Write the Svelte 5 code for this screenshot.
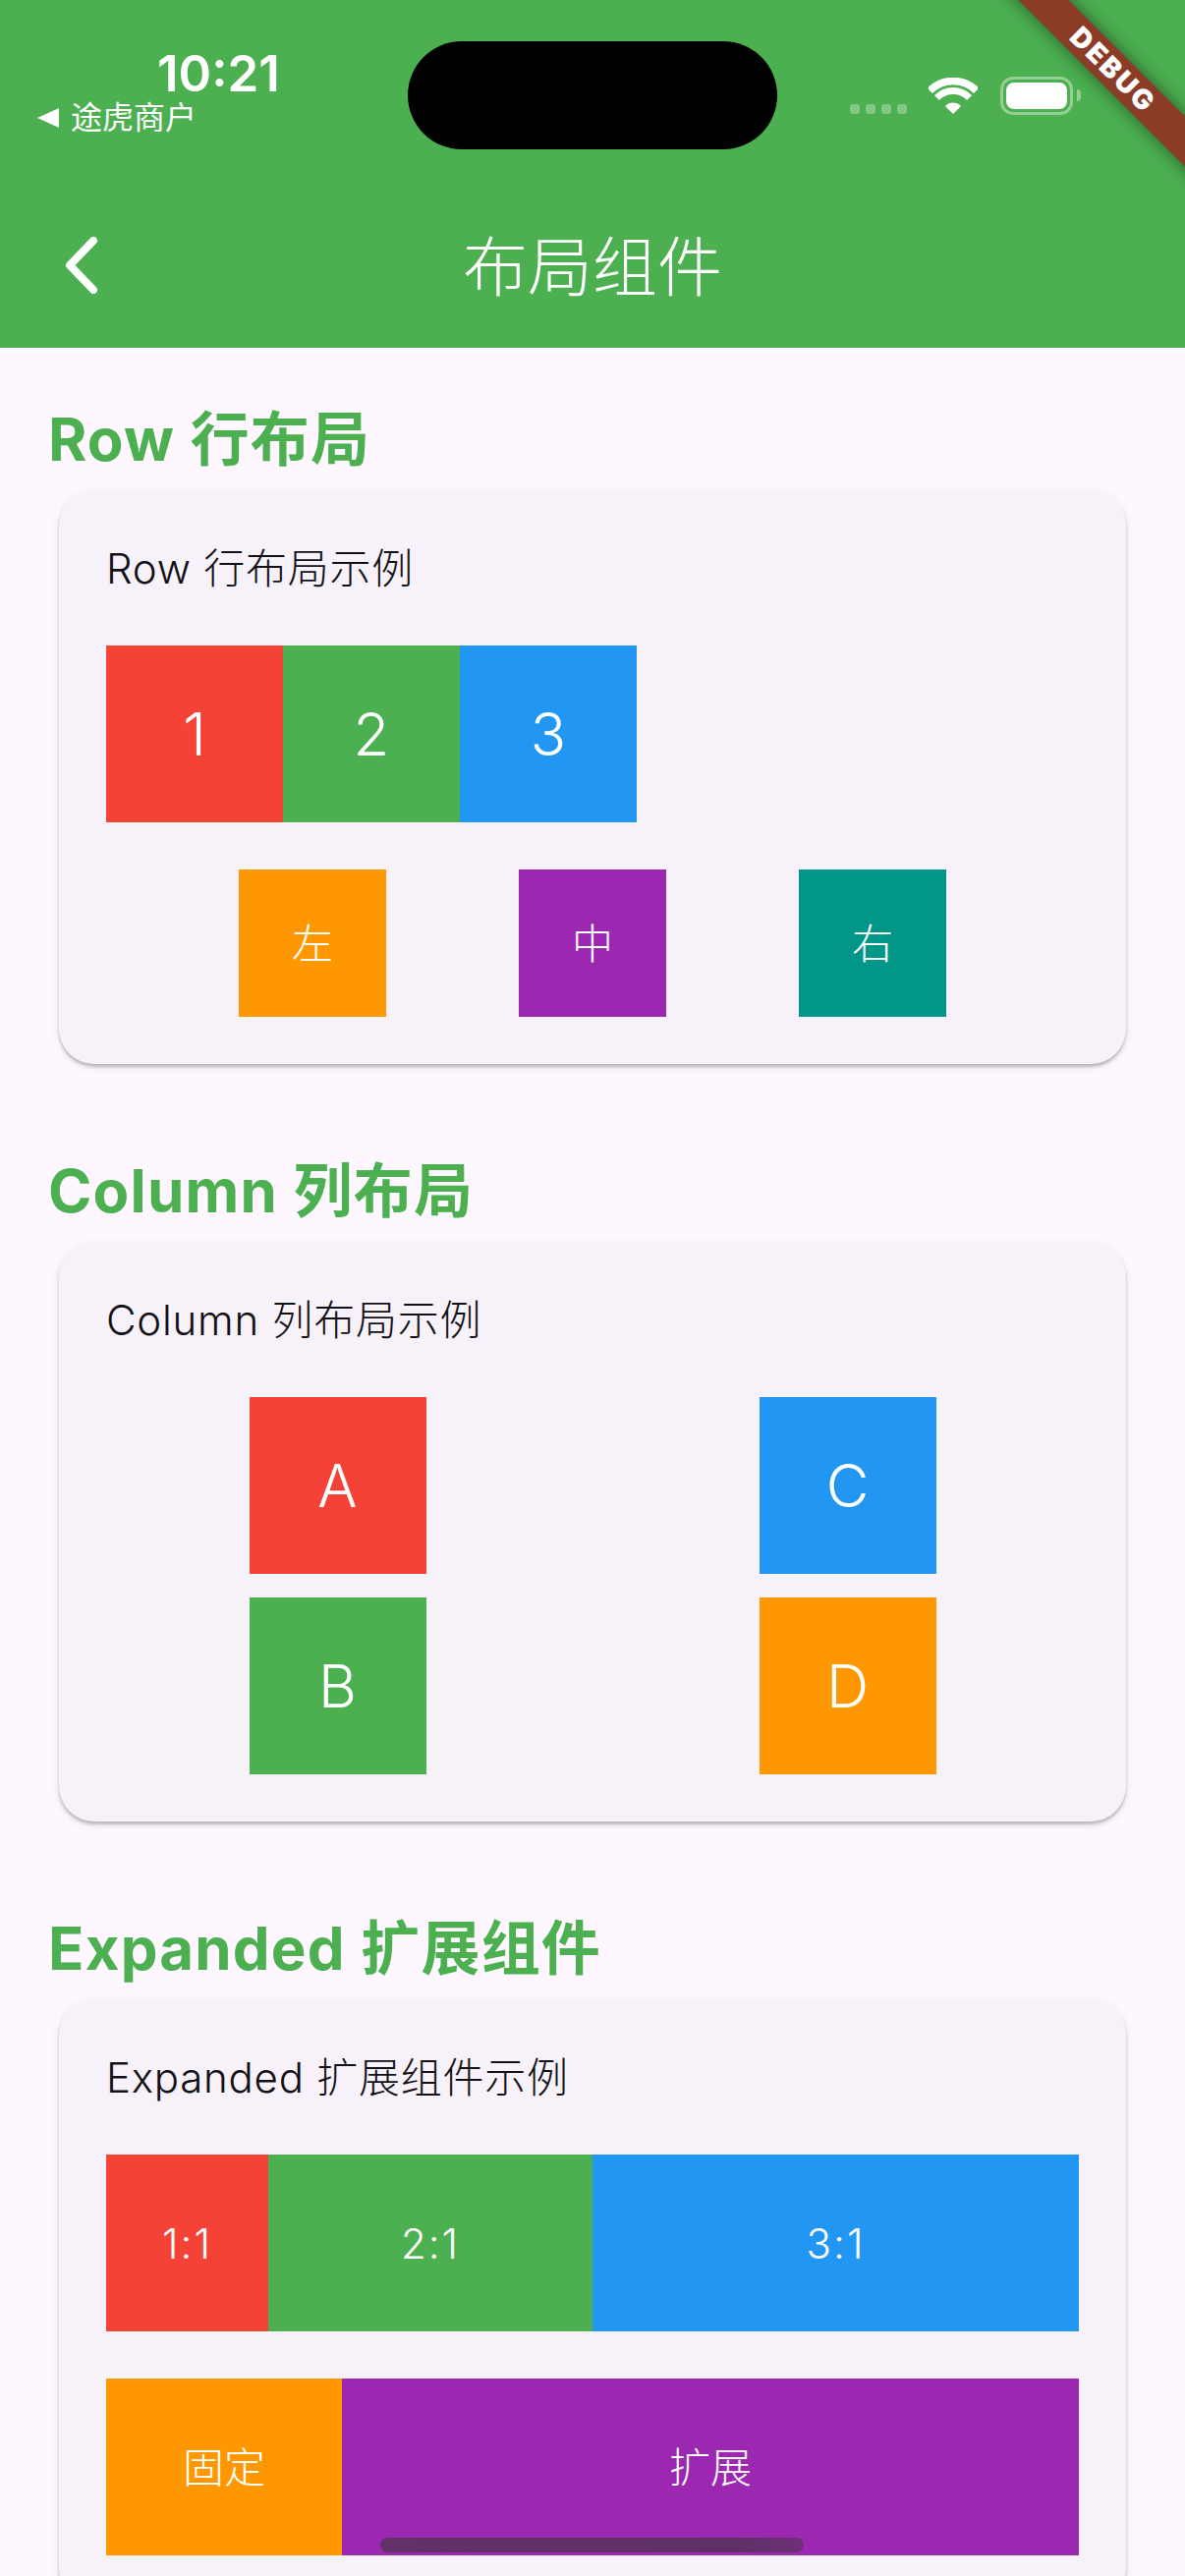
<script lang="ts">
  const rowBoxes = [
    { label: '1', color: 'red' },
    { label: '2', color: 'green' },
    { label: '3', color: 'blue' }
  ];
  const alignBoxes = [
    { label: '左', color: 'orange' },
    { label: '中', color: 'purple' },
    { label: '右', color: 'teal' }
  ];
  const columns = [
    [
      { label: 'A', color: 'red' },
      { label: 'B', color: 'green' }
    ],
    [
      { label: 'C', color: 'blue' },
      { label: 'D', color: 'orange' }
    ]
  ];
  const ratios = [
    { label: '1:1', color: 'red', flex: 1 },
    { label: '2:1', color: 'green', flex: 2 },
    { label: '3:1', color: 'blue', flex: 3 }
  ];
</script>

<div class="screen">
  <header class="app-bar">
    <div class="status">
      <div class="status-left">
        <span class="time">10:21</span>
        <span class="back-app"><i class="back-arrow"></i>途虎商户</span>
      </div>
      <div class="island"></div>
      <div class="status-right">
        <div class="signal"><i></i><i></i><i></i><i></i></div>
        <svg class="wifi" viewBox="0 0 50 37" width="50" height="37" fill="none" stroke="#fff">
          <path d="M1.3 13.3A33.5 33.5 0 0 1 48.7 13.3" stroke-width="7.5" />
          <path d="M8.4 20.4A23.5 23.5 0 0 1 41.6 20.4" stroke-width="7" />
          <path d="M25 37L16.9 28.9A11.5 11.5 0 0 1 33.1 28.9Z" fill="#fff" stroke="none" />
        </svg>
        <div class="battery"><div class="charge"></div></div>
        <div class="nub"></div>
      </div>
    </div>
    <div class="toolbar">
      <svg class="chevron" viewBox="0 0 36 58" width="36" height="58" fill="none" stroke="#fff" stroke-width="8" stroke-linecap="round" stroke-linejoin="round">
        <path d="M30 4L6 29L30 54" />
      </svg>
      <h1>布局组件</h1>
    </div>
  </header>

  <main class="body">
    <section>
      <h2>Row 行布局</h2>
      <div class="card">
        <p class="caption">Row 行布局示例</p>
        <div class="row">
          {#each rowBoxes as box}
            <div class="box large {box.color}">{box.label}</div>
          {/each}
        </div>
        <div class="row evenly">
          {#each alignBoxes as box}
            <div class="box small {box.color}">{box.label}</div>
          {/each}
        </div>
      </div>
    </section>

    <section>
      <h2>Column 列布局</h2>
      <div class="card">
        <p class="caption">Column 列布局示例</p>
        <div class="columns">
          {#each columns as column}
            <div class="column">
              {#each column as box}
                <div class="box large {box.color}">{box.label}</div>
              {/each}
            </div>
          {/each}
        </div>
      </div>
    </section>

    <section>
      <h2>Expanded 扩展组件</h2>
      <div class="card">
        <p class="caption">Expanded 扩展组件示例</p>
        <div class="row">
          {#each ratios as part}
            <div class="box wide ratio {part.color}" style="flex: {part.flex}">{part.label}</div>
          {/each}
        </div>
        <div class="row">
          <div class="box wide fixed orange">固定</div>
          <div class="box wide grow purple">扩展</div>
        </div>
      </div>
    </section>
  </main>

  <div class="banner"><span>DEBUG</span></div>
  <div class="home-indicator"></div>
</div>

<style>
  :global(body) {
    margin: 0;
  }

  .screen {
    position: relative;
    width: 1206px;
    height: 2622px;
    overflow: hidden;
    background: #fef7ff;
    font-family: Inter, 'Noto Sans CJK SC', sans-serif;
    color: #1d1b20;
  }

  .app-bar {
    height: 354px;
    background: #4caf50;
    color: #fff;
  }

  .status {
    display: flex;
    height: 186px;
  }

  .status-left {
    display: flex;
    flex-direction: column;
    width: 415px;
    padding: 47px 0 0 38px;
    box-sizing: border-box;
  }

  .time {
    margin-left: 122px;
    font-size: 51px;
    font-weight: 600;
    line-height: 56px;
  }

  .back-app {
    display: flex;
    align-items: center;
    gap: 12px;
    margin-top: -1px;
    font-size: 32px;
    line-height: 36px;
  }

  .back-arrow {
    width: 0;
    height: 0;
    border-top: 10px solid transparent;
    border-bottom: 10px solid transparent;
    border-right: 22px solid #fff;
  }

  .island {
    width: 376px;
    height: 110px;
    margin-top: 42px;
    border-radius: 55px;
    background: #000;
  }

  .status-right {
    display: flex;
    align-items: flex-start;
    padding-left: 74px;
  }

  .signal {
    display: flex;
    gap: 6px;
    margin-top: 106px;
  }

  .signal i {
    width: 10px;
    height: 10px;
    border-radius: 3px;
    background: rgba(255, 255, 255, 0.3);
  }

  .wifi {
    margin: 79px 0 0 22px;
  }

  .battery {
    box-sizing: border-box;
    width: 74px;
    height: 39px;
    margin: 78px 0 0 23px;
    padding: 3px;
    border: 3px solid rgba(255, 255, 255, 0.4);
    border-radius: 13px;
  }

  .charge {
    height: 100%;
    border-radius: 8px;
    background: #fff;
  }

  .nub {
    width: 4px;
    height: 12px;
    margin: 91px 0 0 4px;
    border-radius: 0 4px 4px 0;
    background: rgba(255, 255, 255, 0.4);
  }

  .toolbar {
    position: relative;
    display: flex;
    align-items: center;
    justify-content: center;
    height: 168px;
  }

  .chevron {
    position: absolute;
    left: 65px;
    top: 55px;
  }

  h1 {
    margin: 0;
    padding-top: 4px;
    font-size: 66px;
    font-weight: 300;
    line-height: 84px;
  }

  .body {
    display: flex;
    flex-direction: column;
    gap: 72px;
    padding: 48px;
  }

  h2 {
    margin: 0;
    padding: 6px 0 0 1px;
    color: #4caf50;
    font-size: 60px;
    font-weight: 700;
    line-height: 79px;
    letter-spacing: 1.2px;
  }

  .card {
    display: flex;
    flex-direction: column;
    gap: 48px;
    margin: 12px;
    padding: 48px;
    border-radius: 36px;
    background: #f7f2fa;
    box-shadow: 0 3px 3px rgba(0, 0, 0, 0.2), 0 3px 9px rgba(0, 0, 0, 0.1);
  }

  .caption {
    margin: 0;
    padding-top: 2px;
    font-size: 42px;
    font-weight: 300;
    line-height: 60px;
    letter-spacing: 0.75px;
    color: #121015;
  }

  .row {
    display: flex;
  }

  .evenly {
    justify-content: space-evenly;
  }

  .columns {
    display: flex;
    justify-content: space-between;
    padding: 0 145.5px;
  }

  .column {
    display: flex;
    flex-direction: column;
    gap: 24px;
  }

  .box {
    display: flex;
    align-items: center;
    justify-content: center;
    box-sizing: border-box;
    color: #fff;
    font-size: 42px;
    font-weight: 300;
  }

  .large {
    width: 180px;
    height: 180px;
    font-size: 60px;
  }

  .small {
    width: 150px;
    height: 150px;
    padding-bottom: 6px;
  }

  .wide {
    height: 180px;
  }

  .ratio {
    letter-spacing: 2px;
  }

  .fixed {
    width: 240px;
    padding-bottom: 6px;
  }

  .grow {
    flex: 1;
    padding-bottom: 6px;
  }

  .red { background: #f44336; }
  .green { background: #4caf50; }
  .blue { background: #2196f3; }
  .orange { background: #ff9800; }
  .purple { background: #9c27b0; }
  .teal { background: #009688; }

  .banner {
    position: absolute;
    left: 933px;
    top: 53px;
    display: flex;
    align-items: center;
    justify-content: center;
    width: 400px;
    height: 36px;
    background: #8a3c27;
    box-shadow: 0 0 18px rgba(0, 0, 0, 0.5);
    transform: rotate(45deg);
    color: #fff;
    font-size: 28px;
    font-weight: 900;
    letter-spacing: 2.5px;
  }

  .home-indicator {
    position: absolute;
    left: 387px;
    top: 2583px;
    width: 431px;
    height: 15px;
    border-radius: 8px;
    background: linear-gradient(90deg, #633069 0%, #5f3068 85%, #6e3078 100%);
  }
</style>
